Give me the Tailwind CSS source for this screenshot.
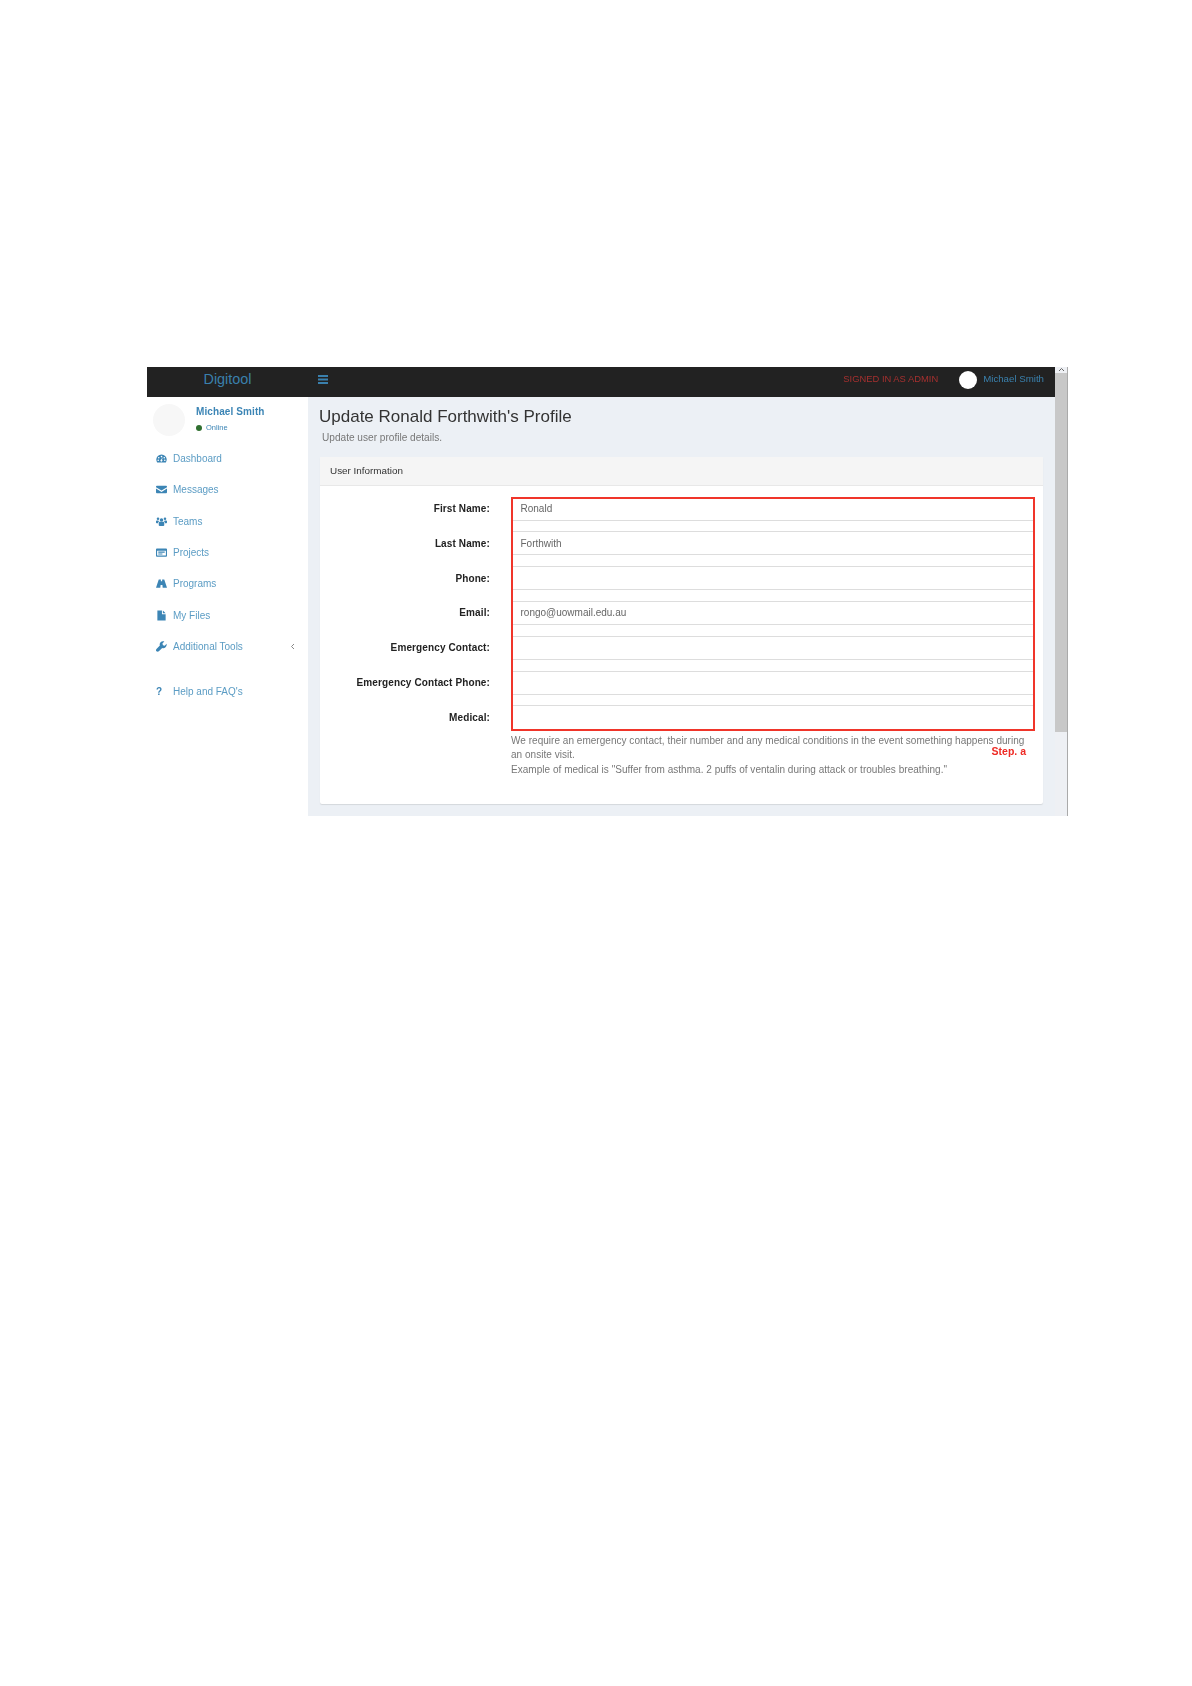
<!DOCTYPE html>
<html lang="en">
<head>
    <meta charset="UTF-8">
    <title>Digitool - Update Profile</title>
    <script src="https://cdn.jsdelivr.net/npm/@tailwindcss/browser@4"></script>
</head>
<body class="bg-white font-['Liberation_Sans',sans-serif]">
    <div class="w-[1192px] h-[1686px] pt-[367px] pl-[147px]">
        <div class="w-[921px] h-[449px] flex border-r border-[#aaa] blur-[0.5px]">
            <div class="w-[908px] flex flex-col">
                <!-- Navbar -->
                <header class="h-[30px] bg-[#222] flex items-center text-[#3a80ad]">
                    <div class="w-[161px] text-center text-[14.4px] pb-[5px]">Digitool</div>
                    <svg class="ml-[10px] mb-[5px]" width="10" height="9" viewBox="0 0 10 9" fill="currentColor"><rect width="10" height="2" y="0"/><rect width="10" height="2" y="3.5"/><rect width="10" height="2" y="7"/></svg>
                    <div class="ml-auto flex items-center pb-[5px]">
                        <span class="text-[9.4px] text-[#a5302f]">SIGNED IN AS ADMIN</span>
                        <span class="w-[18px] h-[18px] rounded-full bg-white ml-[21px] mr-[6px]"></span>
                        <span class="text-[9.7px] mr-[11px]">Michael Smith</span>
                    </div>
                </header>
                <div class="flex flex-1 min-h-0">
                    <!-- Sidebar -->
                    <aside class="w-[161px] bg-white text-[10px] text-[#5b9cc4]">
                        <div class="h-[48px] flex pl-[6px] pt-[7px]">
                            <span class="w-[32px] h-[32px] rounded-full bg-[#f7f7f7]"></span>
                            <div class="ml-[11px] text-[#3c85b5]">
                                <div class="font-bold tracking-[0.1px] leading-[15px]">Michael Smith</div>
                                <div class="flex items-center text-[7.5px] mt-[3px] leading-[12px]"><span class="w-[6px] h-[6px] rounded-full bg-[#2f6f2f] mr-[4px]"></span>Online</div>
                            </div>
                        </div>
                        <nav class="mt-[-2px]">
                            <a href="#" class="h-[31.3px] flex items-center pl-[9px]">
                                <svg class="w-[11px] mr-[6px] text-[#3c85b5]" viewBox="0 0 12 12" fill="currentColor"><path fill-rule="evenodd" d="M6 1.5a5.7 5.7 0 0 0-5.7 5.7c0 1.200.4 2.300 1 3.200h9.400c.6-.9 1-2 1-3.200A5.700 5.700 0 0 0 6 1.500zM6 3a.9.9 0 1 1 0 1.800A.9.9 0 0 1 6 3zM3 4.300a.9.9 0 1 1 0 1.800.9.9 0 0 1 0-1.800zm6 0a.9.9 0 1 1 0 1.800.9.9 0 0 1 0-1.800zM2.400 7a.9.9 0 1 1 0 1.800.9.9 0 0 1 0-1.800zm7.200 0a.9.9 0 1 1 0 1.800.9.9 0 0 1 0-1.800zM6.900 4.800 7.200 5 6.600 7.400a1.100 1.100 0 1 1-.9-.2z"/></svg>
                                Dashboard
                            </a>
                            <a href="#" class="h-[31.3px] flex items-center pl-[9px]">
                                <svg class="w-[11px] mr-[6px] text-[#3c85b5]" viewBox="0 0 12 12" fill="currentColor"><path d="M1 2h10a1 1 0 0 1 1 1v.5L6 7.200 0 3.500V3a1 1 0 0 1 1-1zM0 5v4a1 1 0 0 0 1 1h10a1 1 0 0 0 1-1V5L6 8.800z"/></svg>
                                Messages
                            </a>
                            <a href="#" class="h-[31.3px] flex items-center pl-[9px]">
                                <svg class="w-[11px] mr-[6px] text-[#3c85b5]" viewBox="0 0 12 12" fill="currentColor"><circle cx="6" cy="4.300" r="1.900"/><circle cx="2.200" cy="3" r="1.400"/><circle cx="9.800" cy="3" r="1.400"/><path d="M3 7.200C3 6.600 3.500 6.300 4 6.300h4c.5 0 1 .3 1 .9V10c0 .5-.5.8-1 .8H4c-.5 0-1-.3-1-.8zM0 5.600c0-.5.4-.8.9-.8h1.700c.2.600.5 1 .9 1.200-.9.200-1.200.8-1.200 1.400v.6H.8C.3 8 0 7.700 0 7.200zM12 5.600c0-.5-.4-.8-.9-.8H9.400c-.2.600-.5 1-.9 1.200.9.200 1.200.8 1.200 1.400v.6h1.500c.5 0 .8-.3.8-.8z"/></svg>
                                Teams
                            </a>
                            <a href="#" class="h-[31.3px] flex items-center pl-[9px]">
                                <svg class="w-[11px] mr-[6px] text-[#3c85b5]" viewBox="0 0 12 12" fill="currentColor"><path fill-rule="evenodd" d="M1 1.500h10a1 1 0 0 1 1 1v7a1 1 0 0 1-1 1H1a1 1 0 0 1-1-1v-7a1 1 0 0 1 1-1zM1.200 4v5.300h9.600V4zM2.500 5h7v1.200h-7zm0 2h4.500v1.200H2.500z"/></svg>
                                Projects
                            </a>
                            <a href="#" class="h-[31.3px] flex items-center pl-[9px]">
                                <svg class="w-[11px] mr-[6px] text-[#3c85b5]" viewBox="0 0 12 12" fill="currentColor"><path d="M3 1.500h2.300v2h1.400v-2H9l3 9H7.300L7 7.500H5l-.3 3H0z"/></svg>
                                Programs
                            </a>
                            <a href="#" class="h-[31.3px] flex items-center pl-[9px]">
                                <svg class="w-[11px] mr-[6px] text-[#3c85b5]" viewBox="0 0 12 12" fill="currentColor"><path d="M1.500 0.500H6.500V4.500H10.500V11.500H1.500zM7.500 0.500 10.500 3.500H7.500z"/></svg>
                                My Files
                            </a>
                            <a href="#" class="h-[31.3px] flex items-center pl-[9px]">
                                <svg class="w-[11px] mr-[6px] text-[#3c85b5]" viewBox="0 0 12 12" fill="currentColor"><path d="M11.600 3.100 9.500 5.200 7.600 4.600 7 2.700 9.100.6C7.700 0 6 .3 5 1.400 4 2.400 3.800 3.800 4.200 5L.5 8.700c-.7.700-.7 1.900 0 2.600s1.900.7 2.600 0L6.800 7.600c1.200.4 2.600.200 3.600-.8 1.100-1 1.400-2.300 1.200-3.700z"/></svg>
                                Additional Tools
                                <svg class="ml-auto mr-[13px]" width="5" height="7" viewBox="0 0 5 7" fill="none" stroke="#888" stroke-width="1"><path d="M4 1 1.500 3.500 4 6"/></svg>
                            </a>
                            <a href="#" class="h-[31.3px] flex items-center pl-[9px] mt-[14px]">
                                <span class="w-[11px] mr-[6px] font-bold text-[10px] text-[#3c85b5]">?</span>
                                Help and FAQ's
                            </a>
                        </nav>
                    </aside>
                    <!-- Content -->
                    <main class="flex-1 bg-[#ecf0f5] px-[12px]">
                        <h1 class="text-[17px] leading-[20px] text-[#333] mt-[10px] -ml-px">Update Ronald Forthwith's Profile</h1>
                        <p class="text-[10.1px] leading-[12px] text-[#777] mt-[5px] ml-[2px]">Update user profile details.</p>
                        <section class="mt-[13px] h-[347px] bg-white rounded-[2px] shadow-[0_1px_1px_rgba(0,0,0,0.1)] flex flex-col">
                            <div class="h-[29px] bg-[#f5f5f5] border-b border-[#e8e8e8] flex items-center pl-[10px] text-[9.9px] text-[#333]">User Information</div>
                            <div class="relative pl-[191px] pr-[9px] pt-[11px] flex-1">
                                <form class="space-y-[10.8px]">
                                    <div class="relative h-[23.6px] border-b border-[#ddd] flex items-center pl-[9.5px] text-[10px] text-[#666]">
                                        <label class="absolute right-[100%] w-[170px] mr-[21px] text-right font-bold text-[10px] tracking-[0.12px] text-[#222]">First Name:</label>Ronald
                                    </div>
                                    <div class="relative h-[24px] border-y border-[#ddd] flex items-center pl-[9.5px] text-[10px] text-[#666]">
                                        <label class="absolute right-[100%] w-[170px] mr-[21px] text-right font-bold text-[10px] tracking-[0.12px] text-[#222]">Last Name:</label>Forthwith
                                    </div>
                                    <div class="relative h-[24px] border-y border-[#ddd] flex items-center pl-[9.5px] text-[10px] text-[#666]">
                                        <label class="absolute right-[100%] w-[170px] mr-[21px] text-right font-bold text-[10px] tracking-[0.12px] text-[#222]">Phone:</label>
                                    </div>
                                    <div class="relative h-[24px] border-y border-[#ddd] flex items-center pl-[9.5px] text-[10px] text-[#666]">
                                        <label class="absolute right-[100%] w-[170px] mr-[21px] text-right font-bold text-[10px] tracking-[0.12px] text-[#222]">Email:</label>rongo@uowmail.edu.au
                                    </div>
                                    <div class="relative h-[24px] border-y border-[#ddd] flex items-center pl-[9.5px] text-[10px] text-[#666]">
                                        <label class="absolute right-[100%] w-[170px] mr-[21px] text-right font-bold text-[10px] tracking-[0.12px] text-[#222]">Emergency Contact:</label>
                                    </div>
                                    <div class="relative h-[24px] border-y border-[#ddd] flex items-center pl-[9.5px] text-[10px] text-[#666]">
                                        <label class="absolute right-[100%] w-[170px] mr-[21px] text-right font-bold text-[10px] tracking-[0.12px] text-[#222]">Emergency Contact Phone:</label>
                                    </div>
                                    <div class="relative h-[24px] border-t border-[#ddd] flex items-center pl-[9.5px] text-[10px] text-[#666]">
                                        <label class="absolute right-[100%] w-[170px] mr-[21px] text-right font-bold text-[10px] tracking-[0.12px] text-[#222]">Medical:</label>
                                    </div>
                                </form>
                                <p class="mt-[4.5px] text-[10px] leading-[14.4px] text-[#777] tracking-[0.03px]">We require an emergency contact, their number and any medical conditions in the event something happens during an onsite visit.<br>Example of medical is "Suffer from asthma. 2 puffs of ventalin during attack or troubles breathing."</p>
                                <!-- annotation over the form -->
                                <div class="absolute left-[191px] top-[11px] w-[524px] h-[234px] border-[2px] border-[#f0352a]"></div>
                                <div class="absolute right-[17px] top-[259px] text-[10.5px] leading-[12px] font-bold text-[#ee2a24]">Step. a</div>
                            </div>
                        </section>
                    </main>
                </div>
            </div>
            <!-- Scrollbar -->
            <div class="w-[12px] bg-[#eef0f4] flex flex-col">
                <div class="h-[6px] flex items-start justify-center text-[#666]"><svg width="7" height="5" viewBox="0 0 7 5" fill="none" stroke="currentColor"><path d="M1 4 3.500 1.500 6 4"/></svg></div>
                <div class="h-[359px] bg-[#c8c8c8]"></div>
            </div>
        </div>
    </div>
</body>
</html>
